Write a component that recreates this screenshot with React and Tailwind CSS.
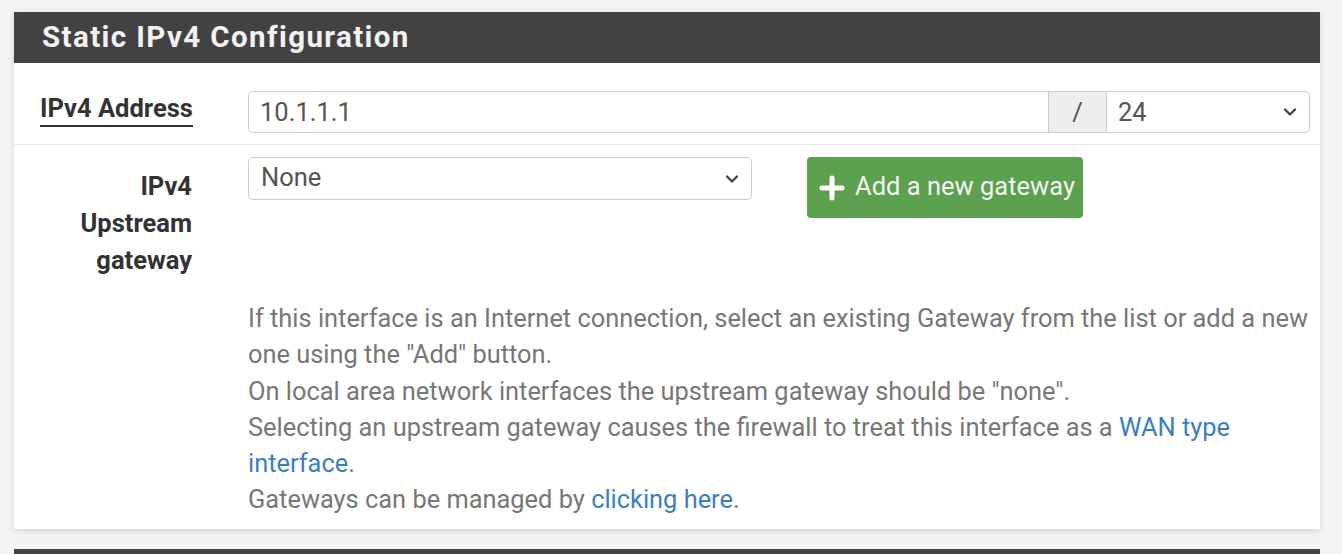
import React from "react";

function Chevron() {
  return (
    <svg width="14" height="10" viewBox="0 0 14 10" className="shrink-0">
      <path d="M2 2.5 L7 7.5 L12 2.5" fill="none" stroke="#444" strokeWidth="2.4" strokeLinecap="round" strokeLinejoin="round" />
    </svg>
  );
}

export default function App() {
  return (
    <div className="w-[1342px] h-[554px] bg-[#f3f3f3] overflow-hidden pt-[12px] pl-[14px]" style={{ fontFamily: "Roboto, 'Liberation Sans', sans-serif" }}>
      <div className="w-[1306px] bg-white shadow-[0_2px_6px_rgba(0,0,0,0.12)]">
        <div className="h-[51px] bg-[#424242] flex items-center pl-[28px]">
          <h2 className="text-[29.5px] font-bold text-[#f2f2f2] tracking-[1.4px]">Static IPv4 Configuration</h2>
        </div>
        {/* Row 1 */}
        <div className="flex pt-[28px] pb-[11px] border-b border-[#e6e6e6]">
          <div className="w-[234px] pl-[26px] flex items-start pt-[0px]">
            <span className="text-[25.5px] font-bold text-[#333] border-b-2 border-[#333] leading-[34px]">IPv4 Address</span>
          </div>
          <div className="flex h-[42px] w-[1062px]">
            <div className="w-[801px] border border-[#ccc] rounded-l-[5px] flex items-center pl-[11px] text-[25.5px] text-[#555]">10.1.1.1</div>
            <div className="w-[57px] bg-[#eeeeee] border-y border-[#ccc] flex items-center justify-center text-[25.5px] text-[#555]">/</div>
            <div className="w-[204px] border border-[#ccc] rounded-r-[5px] flex items-center justify-between pl-[11px] pr-[12px] text-[25.5px] text-[#555]">
              <span>24</span>
              <Chevron />
            </div>
          </div>
        </div>
        {/* Row 2 */}
        <div className="flex pt-[12px] pb-[11px]">
          <div className="w-[234px] pl-[26px] pr-[56px] text-right text-[25.5px] font-bold text-[#333] leading-[37px] pt-[11px]">
            <div className="w-[152px]">IPv4<br />Upstream<br />gateway</div>
          </div>
          <div className="flex flex-col w-[1066px]">
            <div className="flex items-start gap-[55px]">
              <div className="w-[504px] h-[43px] border border-[#ccc] rounded-[5px] flex items-center justify-between pl-[12px] pr-[12px] text-[25.5px] text-[#555]">
                <span className="-mt-[2px]">None</span>
                <Chevron />
              </div>
              <div className="w-[276px] h-[61px] bg-[#5ba150] rounded-[4px] flex items-center pl-[10px] gap-[8px] text-[25.5px] text-[#f4f4f4]">
                <svg width="30" height="30" viewBox="0 0 30 30">
                  <path d="M15 5 V25 M5 15 H25" stroke="#ffffff" strokeWidth="5" strokeLinecap="round" />
                </svg>
                <span className="-mt-[2px]">Add a new gateway</span>
              </div>
            </div>
            <div className="mt-[82px] text-[25.4px] leading-[36.3px] text-[#777]">
              If this interface is an Internet connection, select an existing Gateway from the list or add a new one using the "Add" button.<br />
              On local area network interfaces the upstream gateway should be "none".<br />
              Selecting an upstream gateway causes the firewall to treat this interface as a <span className="text-[#3b7fc2]">WAN type interface</span>.<br />
              Gateways can be managed by <span className="text-[#3b7fc2]">clicking here</span>.
            </div>
          </div>
        </div>
      </div>
      <div className="mt-[20px] w-[1306px] h-[60px] bg-[#424242]"></div>
    </div>
  );
}
